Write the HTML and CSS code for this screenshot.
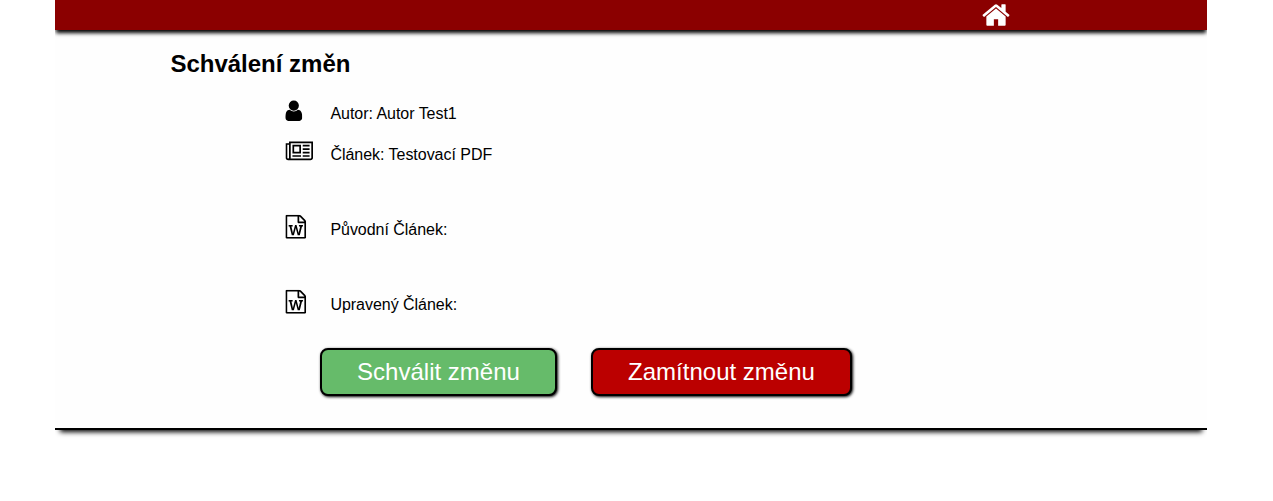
FILE: index.html
```html
<!DOCTYPE html>
<html lang="cs">
<head>
<meta charset="utf-8">
<title>Schválení změn</title>
<link rel="stylesheet" href="styles.css">
</head>
<body>
<header class="topbar">
  <a class="home" aria-label="Domů"><svg viewBox="64 0 1664 1792"><path d="M1472 992v480q0 26-19 45t-45 19h-384v-384h-256v384h-384q-26 0-45-19t-19-45v-480q0-1 .5-3t.5-3l575-474 575 474q1 2 1 6zm223-69l-62 74q-8 9-21 11h-3q-13 0-21-7l-692-577-692 577q-12 8-24 7-13-2-21-11l-62-74q-8-10-7-23.5t11-21.5l719-599q32-26 76-26t76 26l244 204v-195q0-14 9-23t23-9h192q14 0 23 9t9 23v408l219 182q10 8 11 21.5t-7 23.5z"/></svg></a>
</header>
<main class="content">
  <h2 class="title">Schválení změn</h2>
  <div class="details">
    <div class="row"><svg class="icon user" viewBox="256 0 1280 1792"><path d="M1536 1399q0 109-62.5 187t-150.5 78h-854q-88 0-150.5-78t-62.5-187q0-85 8.5-160.5t31.5-152 58.5-131 94-89 134.5-34.5q131 128 313 128t313-128q76 0 134.5 34.5t94 89 58.5 131 31.5 152 8.5 160.5zm-256-887q0 159-112.5 271.5t-271.5 112.5-271.5-112.5-112.5-271.5 112.5-271.5 271.5-112.5 271.5 112.5 112.5 271.5z"/></svg><span class="label">Autor: Autor Test1</span></div>
    <div class="row"><svg class="icon news" viewBox="0 0 2048 1792"><path d="M1024 512h-384v384h384v-384zm128 640v128h-640v-128h640zm0-768v640h-640v-640h640zm640 768v128h-512v-128h512zm0-256v128h-512v-128h512zm0-256v128h-512v-128h512zm0-256v128h-512v-128h512zm-1536 960v-960h-128v960q0 26 19 45t45 19 45-19 19-45zm1664 0v-1088h-1536v1088q0 33-11 64h1483q26 0 45-19t19-45zm128-1216v1216q0 80-56 136t-136 56h-1664q-80 0-136-56t-56-136v-1088h256v-128h1792z"/></svg><span class="label">Článek: Testovací PDF</span></div>
    <div class="row spaced"><svg class="icon file" viewBox="128 0 1536 1792"><path d="M1596 380q28 28 48 76t20 88v1152q0 40-28 68t-68 28h-1344q-40 0-68-28t-28-68v-1600q0-40 28-68t68-28h896q40 0 88 20t76 48zm-444-244v376h376q-10-29-22-41l-313-313q-12-12-41-22zm384 1528v-1024h-416q-40 0-68-28t-28-68v-416h-768v1536h1280zm-1175-896v107h70l164 661h159l128-485q7-20 10-46 2-16 2-24h4l3 24q1 3 3.5 20t5.5 26l128 485h159l164-661h70v-107h-300v107h90l-99 438q-5 20-7 46l-2 21h-4q0-3-.5-6.5t-1.5-8-1-6.5q-1-5-4-21t-5-25l-144-545h-114l-144 545q-2 9-4.5 24.5t-3.5 21.5l-4 21h-4l-2-21q-2-26-7-46l-99-438h90v-107h-300z"/></svg><span class="label">Původní Článek:</span></div>
    <div class="row spaced"><svg class="icon file" viewBox="128 0 1536 1792"><path d="M1596 380q28 28 48 76t20 88v1152q0 40-28 68t-68 28h-1344q-40 0-68-28t-28-68v-1600q0-40 28-68t68-28h896q40 0 88 20t76 48zm-444-244v376h376q-10-29-22-41l-313-313q-12-12-41-22zm384 1528v-1024h-416q-40 0-68-28t-28-68v-416h-768v1536h1280zm-1175-896v107h70l164 661h159l128-485q7-20 10-46 2-16 2-24h4l3 24q1 3 3.5 20t5.5 26l128 485h159l164-661h70v-107h-300v107h90l-99 438q-5 20-7 46l-2 21h-4q0-3-.5-6.5t-1.5-8-1-6.5q-1-5-4-21t-5-25l-144-545h-114l-144 545q-2 9-4.5 24.5t-3.5 21.5l-4 21h-4l-2-21q-2-26-7-46l-99-438h90v-107h-300z"/></svg><span class="label">Upravený Článek:</span></div>
  </div>
  <div class="actions">
    <button class="button approve">Schválit změnu</button>
    <button class="button reject">Zamítnout změnu</button>
  </div>
</main>
</body>
</html>
```
FILE: styles.css
```css
* { box-sizing: border-box; }
body {
  margin: 0 0 0 55px;
  width: 1152px;
  min-height: 100vh;
  background: #fff;
  color: #000;
  font-family: "Liberation Sans", Arial, sans-serif;
  font-size: 16px;
}
svg { display: block; fill: currentColor; }
.topbar {
  position: relative;
  z-index: 1;
  height: 30px;
  padding-left: 927px;
  background: #8b0000;
  box-shadow: 0 4px 4px -1px #000, 0 0 5px rgba(0, 0, 0, 0.15);
}
.home { display: block; width: 28px; color: #fff; }
.home svg { width: 28px; height: 30px; }
.content {
  height: 400px;
  padding: 20px 0 0 115.4px;
  border-bottom: 2px solid #000;
  background: #fefefe;
  box-shadow: 0 7px 5px -5px #000;
}
.title { margin: 0; font-size: 24px; line-height: 28px; }
.details { padding: 21px 0 0 115px; }
.row { display: flex; height: 41px; }
.row.spaced { margin-top: 34px; }
.icon { flex: none; height: 24px; transform: translate(0.3px, -0.3px); }
.user { width: 17px; margin-right: 28px; }
.news { width: 28px; margin-right: 17px; }
.file { width: 21px; margin-right: 24px; }
.label { padding-top: 6px; line-height: 18px; letter-spacing: -0.03px; }
.actions { display: flex; gap: 34px; padding: 17px 0 0 149.6px; }
.button {
  height: 48px;
  padding: 0;
  border: 2px solid #000;
  border-radius: 8px;
  box-shadow: 1px 1px 3px #000;
  color: #fff;
  font-family: inherit;
  font-size: 24px;
}
.approve { width: 237px; background: #66bb6a; }
.reject { width: 261px; background: #bb0000; }
```
